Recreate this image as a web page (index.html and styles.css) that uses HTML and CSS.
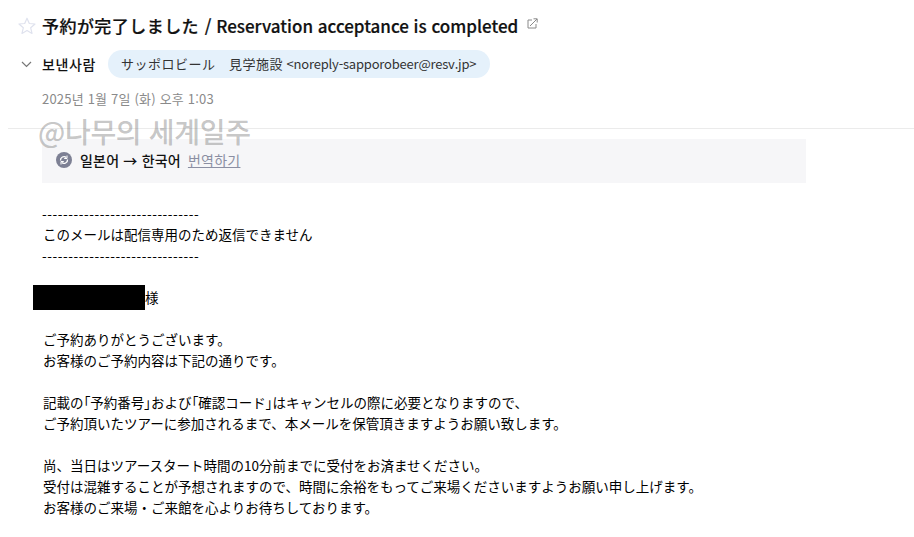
FILE: index.html
```html
<!DOCTYPE html>
<html lang="ko">
    <head>
        <meta charset="UTF-8">
        <meta name="viewport" content="width=device-width, initial-scale=1.0">
        <link rel="stylesheet" href="styles.css">
        <title>Mail</title>
    </head>
    <body>
        <header class="mail-head">
            <div class="title-row">
                <svg class="star" width="18" height="18" viewBox="0 0 18 18">
                    <path d="M9 1.2l2.3 5.3 5.7.5-4.3 3.8 1.3 5.6L9 13.5l-5 2.9 1.3-5.6L1 7l5.7-.5z" fill="none" stroke="#dfe2ee" stroke-width="1.2" stroke-linejoin="round"/>
                </svg>
                <h1 class="title"><span class="title-ja" lang="ja">予約が完了しました</span> / Reservation acceptance is completed</h1>
                <svg class="popout" width="11" height="11" viewBox="0 0 11 11">
                    <path d="M5 2H1v8h8V6M3 8l7-7M6.5 .8h3.7v3.7" fill="none" stroke="#8a8a8a" stroke-width="1"/>
                </svg>
            </div>
            <div class="sender-row">
                <svg class="chevron" width="11" height="7" viewBox="0 0 11 7">
                    <path d="M1 1l4.5 4.5L10 1" fill="none" stroke="#777" stroke-width="1.2"/>
                </svg>
                <span class="sender-label">보낸사람</span>
                <span class="sender-chip"><span class="sender-name" lang="ja">サッポロビール　見学施設</span> <span class="sender-mail">&lt;noreply-sapporobeer@resv.jp&gt;</span></span>
            </div>
            <div class="mail-date">2025년 1월 7일 (화) 오후 1:03</div>
        </header>

        <div class="divider"></div>
        <div class="watermark">@나무의 세계일주</div>

        <div class="translate-bar">
            <svg class="translate-icon" width="16" height="16" viewBox="0 0 16 16">
                <circle cx="8" cy="8" r="8" fill="#7d8094"/>
                <path d="M4.5 8.5a3.5 3.5 0 0 1 5.8-3M11.5 7.5a3.5 3.5 0 0 1-5.8 3" fill="none" stroke="#fff" stroke-width="1.3"/>
                <path d="M11 3.5v3H8.2M5 12.5v-3h2.8" fill="none" stroke="#fff" stroke-width="1"/>
            </svg>
            <span class="translate-text">일본어 → 한국어</span>
            <a class="translate-link" href="#">번역하기</a>
        </div>

        <div class="mail-body" lang="ja">
            <p class="dashes">------------------------------</p>
            <p>このメールは配信専用のため返信できません</p>
            <p class="dashes">------------------------------</p>
            <br>
            <p class="name-line"><span class="redacted"></span>様</p>
            <br>
            <p>ご予約ありがとうございます。</p>
            <p>お客様のご予約内容は下記の通りです。</p>
            <br>
            <p>記載の<span class="bracket">「</span>予約番号<span class="bracket">」</span>および<span class="bracket">「</span>確認コード<span class="bracket">」</span>はキャンセルの際に必要となりますので、</p>
            <p>ご予約頂いたツアーに参加されるまで、本メールを保管頂きますようお願い致します。</p>
            <br>
            <p>尚、当日はツアースタート時間の10分前までに受付をお済ませください。</p>
            <p>受付は混雑することが予想されますので、時間に余裕をもってご来場くださいますようお願い申し上げます。</p>
            <p>お客様のご来場・ご来館を心よりお待ちしております。</p>
        </div>
    </body>
</html>
```

FILE: styles.css
```css
html,
body {
    margin: 0;
    height: 537px;
    overflow: hidden;
    background: #fff;
    color: #111;
    font-family: "Noto Sans CJK KR", "Noto Sans", sans-serif;
}

body {
    position: relative;
}

.mail-head {
    padding: 14px 0 0 18px;
}

.title-row {
    display: flex;
    align-items: center;
    height: 24px;
}

.star {
    flex: none;
}

.title {
    margin: 0 0 0 6px;
    font-size: 17px;
    font-weight: 500;
    line-height: 24px;
    white-space: nowrap;
    -webkit-text-stroke: 0.2px #111;
}

.title-ja {
    font-family: "Noto Sans CJK JP", sans-serif;
    letter-spacing: 0.45px;
    margin-right: 1px;
}

.popout {
    margin: -6px 0 0 9px;
}

.sender-row {
    display: flex;
    align-items: center;
    margin-top: 12px;
    height: 28px;
}

.chevron {
    margin-left: 3px;
}

.sender-label {
    margin-left: 10px;
    font-size: 14px;
    font-weight: 500;
    letter-spacing: 0.6px;
}

.sender-chip {
    margin-left: 12px;
    padding: 0 14px 0 13px;
    height: 28px;
    line-height: 28px;
    border-radius: 14px;
    background: #e5f1fb;
    color: #333;
    font-size: 13px;
    white-space: nowrap;
}

.sender-name {
    font-family: "Noto Sans CJK JP", sans-serif;
    letter-spacing: 0.5px;
}

.sender-mail {
    letter-spacing: -0.2px;
}

.mail-date {
    margin: 12px 0 0 24px;
    font-size: 13px;
    letter-spacing: 0.2px;
    line-height: 18px;
    color: #8a8a8a;
}

.divider {
    margin: 20px 0 0 8px;
    height: 1px;
    background: #ebebeb;
}

.watermark {
    position: absolute;
    left: 38px;
    top: 113px;
    font-size: 28px;
    font-weight: 500;
    line-height: 36px;
    letter-spacing: -0.3px;
    color: rgba(110, 110, 110, 0.4);
    white-space: nowrap;
}

.translate-bar {
    display: flex;
    align-items: center;
    box-sizing: border-box;
    margin: 10px 0 0 42px;
    padding: 0 0 2px 14px;
    width: 764px;
    height: 44px;
    background: #f6f6f8;
    font-size: 14px;
}

.translate-text {
    margin-left: 8px;
    font-weight: 500;
    letter-spacing: 0.2px;
}

.translate-link {
    margin-left: 7px;
    color: #8b8fa3;
    letter-spacing: 0.25px;
}

.mail-body {
    margin: 20px 0 0 43px;
    font-family: "Noto Sans CJK JP", sans-serif;
    font-size: 13.5px;
    line-height: 21px;
    color: #000;
}

.mail-body p {
    margin: 0;
    white-space: nowrap;
}

.dashes {
    margin-left: -1px !important;
    letter-spacing: 0.56px;
}

.bracket {
    font-feature-settings: "palt";
}

.name-line {
    display: flex;
    align-items: center;
    height: 21px;
    margin-left: -10px !important;
}

.redacted {
    width: 112px;
    height: 25px;
    background: #000;
}
```
